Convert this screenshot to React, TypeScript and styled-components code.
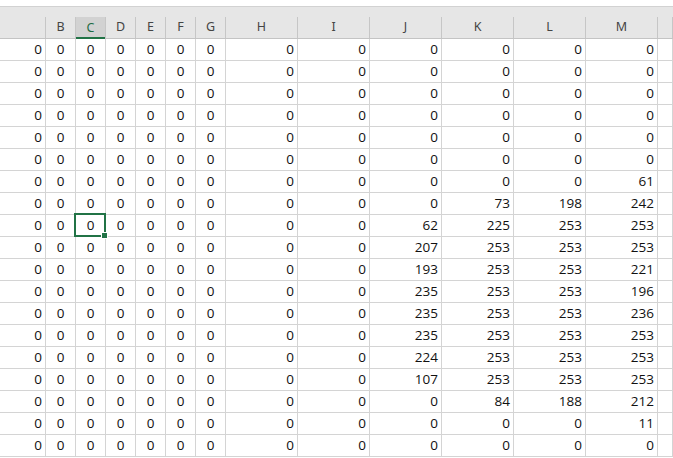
import React from "react";
import styled, { createGlobalStyle, css } from "styled-components";

const GlobalStyle = createGlobalStyle`
  html, body { margin: 0; padding: 0; background: #ffffff; overflow: hidden; }
  #root { width: 673px; height: 458px; overflow: hidden; }
`;

const COLS = ["A", "B", "C", "D", "E", "F", "G", "H", "I", "J", "K", "L", "M", "N"];
const WIDTHS = "46px repeat(6, 30px) repeat(6, 72px) 1fr";
const CENTERED = new Set(["B", "C", "D", "E", "F", "G"]);

const jklm: number[][] = [
  [0, 0, 0, 0],
  [0, 0, 0, 0],
  [0, 0, 0, 0],
  [0, 0, 0, 0],
  [0, 0, 0, 0],
  [0, 0, 0, 0],
  [0, 0, 0, 61],
  [0, 73, 198, 242],
  [62, 225, 253, 253],
  [207, 253, 253, 253],
  [193, 253, 253, 221],
  [235, 253, 253, 196],
  [235, 253, 253, 236],
  [235, 253, 253, 253],
  [224, 253, 253, 253],
  [107, 253, 253, 253],
  [0, 84, 188, 212],
  [0, 0, 0, 11],
  [0, 0, 0, 0],
];

const Sheet = styled.div`
  width: 673px;
  height: 458px;
  overflow: hidden;
  background: #ffffff;
  font-family: "Open Sans", "Liberation Sans", sans-serif;
`;

const TopStrip = styled.div`
  height: 6px;
  background: #ffffff;
  border-bottom: 1px solid #d2d2d2;
`;

const HeaderBand = styled.div`
  background: #e6e6e6;
  padding-top: 10px;
`;

const Row = styled.div`
  display: grid;
  grid-template-columns: ${WIDTHS};
`;

const HeaderRow = styled(Row)`
  height: 22px;
  border-bottom: 1px solid #c4c4c4;
  box-sizing: border-box;
`;

const HeaderCell = styled.div<{ $active?: boolean }>`
  box-sizing: border-box;
  border-right: 1px solid #c6c6c6;
  display: flex;
  align-items: center;
  justify-content: center;
  padding-bottom: 2px;
  font-family: "Noto Sans", "Open Sans", sans-serif;
  font-size: 12.5px;
  color: #444444;
  ${(p) =>
    p.$active &&
    css`
      background: #d2d2d2;
      color: #1e6b44;
      box-shadow: inset 0 -2px 0 #217346;
      margin-bottom: -1px;
    `}
`;

const DataRow = styled(Row)`
  height: 22px;
`;

const Cell = styled.div<{ $center?: boolean; $selected?: boolean }>`
  position: relative;
  box-sizing: border-box;
  border-right: 1px solid #d4d4d4;
  border-bottom: 1px solid #d4d4d4;
  display: flex;
  align-items: flex-end;
  justify-content: ${(p) => (p.$center ? "center" : "flex-end")};
  padding: 0 3px 4px 3px;
  font-size: 13.5px;
  line-height: 1;
  color: #111111;
  ${(p) =>
    p.$selected &&
    css`
      &::after {
        content: "";
        position: absolute;
        top: -2px;
        left: -2px;
        right: -1px;
        bottom: -1px;
        border: 2px solid #217346;
        z-index: 1;
      }
    `}
`;

const FillHandle = styled.span`
  position: absolute;
  right: -3px;
  bottom: -3px;
  width: 5px;
  height: 5px;
  background: #217346;
  border: 1px solid #ffffff;
  z-index: 2;
`;

function valueFor(col: string, r: number): string {
  if (col === "N") return "";
  const idx = ["J", "K", "L", "M"].indexOf(col);
  if (idx >= 0) return String(jklm[r][idx]);
  return "0";
}

export default function App() {
  return (
    <Sheet>
      <GlobalStyle />
      <TopStrip />
      <HeaderBand>
        <HeaderRow>
          {COLS.map((c) => (
            <HeaderCell key={c} $active={c === "C"}>
              {c === "A" || c === "N" ? "" : c}
            </HeaderCell>
          ))}
        </HeaderRow>
      </HeaderBand>
      {jklm.map((_, r) => (
        <DataRow key={r}>
          {COLS.map((c) => {
            const selected = r === 8 && c === "C";
            return (
              <Cell key={c} $center={CENTERED.has(c)} $selected={selected}>
                {valueFor(c, r)}
                {selected && <FillHandle />}
              </Cell>
            );
          })}
        </DataRow>
      ))}
    </Sheet>
  );
}
